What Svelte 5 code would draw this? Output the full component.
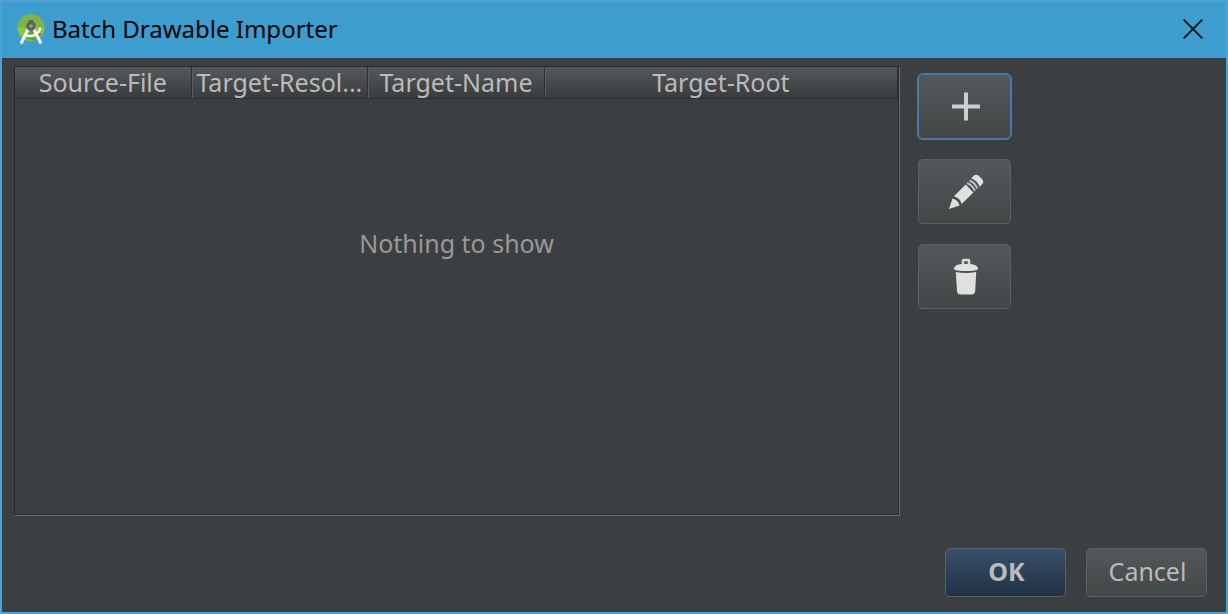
<script>
  const columns = ['Source-File', 'Target-Resol...', 'Target-Name', 'Target-Root'];
</script>

<main class="dialog">
  <header class="titlebar">
    <svg class="logo" viewBox="0 0 28 32" aria-hidden="true">
      <circle cx="14" cy="14.500" r="13.500" fill="#7db443" />
      <path d="M.5 14.500a13.500 13.500 0 0 0 27 0z" fill="#8bc24a" />
      <path d="M8 25 14 16l11 5a13.500 13.500 0 0 1-9 6.500z" fill="#6a9c3a" />
      <path d="M11.500 15.500 4 30.500M16.500 15.500 24 30.500" stroke="#f4f4f4" stroke-width="3" />
      <path d="M8 22c6 2.500 13.500.5 15.500-7.500" fill="none" stroke="#f4f4f4" stroke-width="2.600" />
      <path d="M12 7h4v3h-4z" fill="#5c6166" />
      <circle cx="14" cy="13" r="3.300" fill="#86b650" stroke="#5c6166" stroke-width="3" />
    </svg>
    <h1>Batch Drawable Importer</h1>
    <button class="close" aria-label="Close">
      <svg viewBox="0 0 20 20" aria-hidden="true"><path d="M.7.7 19.300 19.300M19.300.7.7 19.300" stroke="#111" stroke-width="1.900" /></svg>
    </button>
  </header>

  <div class="content">
    <div class="frame">
      <table>
        <thead>
          <tr>
            {#each columns as column}
              <th scope="col">{column}</th>
            {/each}
          </tr>
        </thead>
        <tbody>
          <tr><td colspan={columns.length}>Nothing to show</td></tr>
        </tbody>
      </table>
    </div>
    <div class="tools">
      <button class="tool focused" aria-label="Add">
        <svg viewBox="0 0 40 40" aria-hidden="true"><path d="M20 5.500v28M6 19.500h28" stroke="#cccfd0" stroke-width="4" /></svg>
      </button>
      <button class="tool" aria-label="Edit">
        <svg viewBox="0 0 40 40" aria-hidden="true">
          <g transform="translate(3 37) rotate(-45)" fill="#dfe1e1">
            <path d="M0 0 10-5Q13 0 10 5z" />
            <path d="M12.500-5.500H29v11H12.500Q15.500 0 12.500-5.500z" />
            <path d="M31-5.500q2.500 5.500 0 11M34.500-5.500q2.500 5.500 0 11" fill="none" stroke="#c5c8c9" stroke-width="1.800" />
            <path d="M37.500-6h3q4 0 4 4v4q0 4-4 4h-3q2.500-6 0-12z" />
          </g>
        </svg>
      </button>
      <button class="tool" aria-label="Delete">
        <svg viewBox="0 0 40 40" aria-hidden="true">
          <path d="M17 8V3.500q0-.5.500-.5h5q.5 0 .5.500V8" fill="none" stroke="#d6d8d9" stroke-width="2.600" />
          <path d="M8 12q0-4.500 8-5h8q8 .5 8 5-1 2-12 2t-12-2z" fill="#dfe1e1" />
          <path d="M9.800 15q10 2 20.400 0l-1 19q-.3 3.500-4 3.500H15q-3.700 0-4-3.500z" fill="#dfe1e1" />
        </svg>
      </button>
    </div>
  </div>

  <footer>
    <button class="action primary">OK</button>
    <button class="action">Cancel</button>
  </footer>
</main>

<style>
  :global(body) {
    margin: 0;
  }
  .dialog {
    box-sizing: border-box;
    min-height: 100vh;
    display: flex;
    flex-direction: column;
    background: #3c3f41;
    border: 2px solid #4ea3d2;
    color: #bbbbbb;
    font: 25px/32px "Noto Sans", "Open Sans", sans-serif;
  }
  button {
    padding: 0;
    font: inherit;
    color: inherit;
  }
  .titlebar {
    box-sizing: border-box;
    display: flex;
    align-items: center;
    height: 56px;
    padding: 0 23px 2px 15px;
    background: #3e9dcf;
    color: #000;
  }
  .logo {
    width: 28px;
    height: 32px;
  }
  h1 {
    flex: 1;
    margin: 0 0 0 7px;
    font-size: 24px;
    font-weight: 400;
  }
  .close {
    display: flex;
    border: 0;
    background: none;
  }
  .close svg {
    width: 20px;
    height: 20px;
  }
  .content {
    flex: 1;
    display: flex;
    gap: 19px;
    padding: 8px 0 0 12px;
  }
  .frame {
    flex: 1;
    display: flex;
    border: 1px solid #27292a;
    box-shadow: 1px 1px 0 #6d7072;
  }
  table {
    flex: 1;
    table-layout: fixed;
    width: 100%;
    border-collapse: separate;
    border-spacing: 0;
  }
  th {
    box-sizing: border-box;
    width: 20%;
    height: 32px;
    padding: 0;
    white-space: nowrap;
    font-weight: 400;
    line-height: 31px;
    background: linear-gradient(#55595b, #393c3e);
    border-bottom: 1px solid #2c2e30;
    border-right: 1px solid #2c2e30;
    box-shadow: inset 1px 0 0 #5b5f61;
  }
  th:first-child {
    box-shadow: none;
  }
  th:last-child {
    width: 40%;
  }
  td {
    padding: 128px 0 0;
    text-align: center;
    vertical-align: top;
    color: #999999;
  }
  .tools {
    flex: 0 0 308px;
    display: flex;
    flex-direction: column;
    align-items: flex-start;
    gap: 20px;
    padding-top: 8px;
  }
  .tool,
  .action {
    box-sizing: border-box;
    border: 1px solid #5e6162;
    border-radius: 5px;
    background: linear-gradient(#53585a, #434748);
  }
  .tool {
    display: flex;
    align-items: center;
    justify-content: center;
    width: 93px;
    height: 65px;
    padding-left: 2px;
  }
  .tool svg {
    width: 40px;
    height: 40px;
  }
  .focused {
    border-color: #4a78ad;
    box-shadow: 0 0 0 1px #4a78ad;
  }
  footer {
    display: flex;
    justify-content: flex-end;
    gap: 20px;
    padding: 33px 19px 15px;
  }
  .action {
    width: 121px;
    height: 49px;
    padding: 0 0 3px 2px;
  }
  .primary {
    background: linear-gradient(#384f6c, #233143);
    font-weight: 700;
  }
</style>
